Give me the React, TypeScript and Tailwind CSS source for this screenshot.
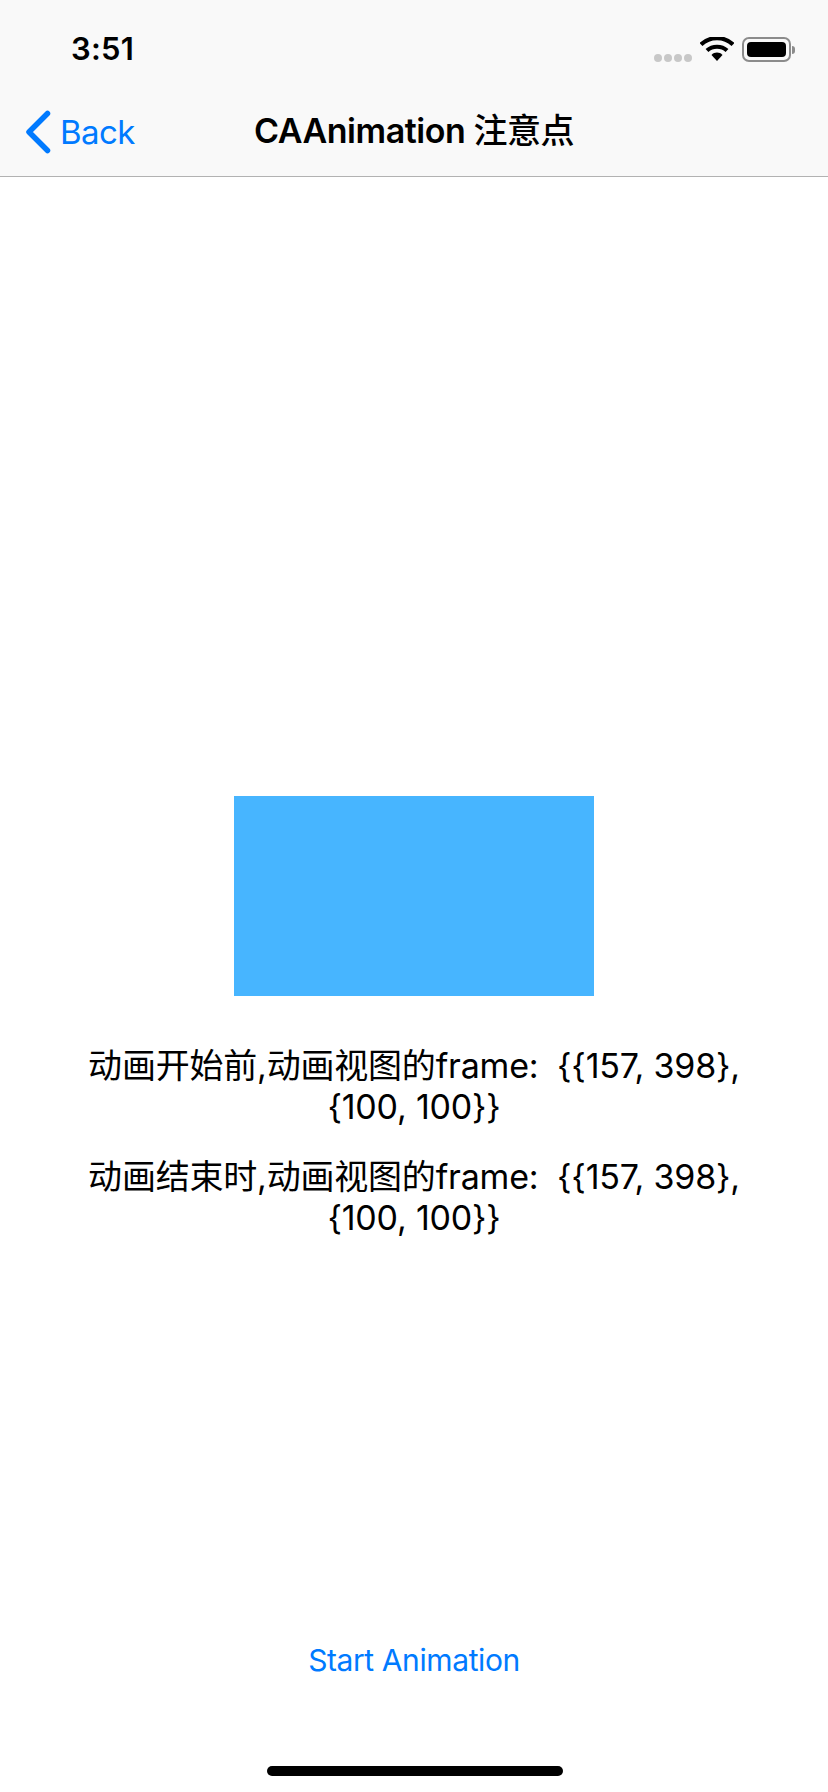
export default function App() {
  const sans = "font-['Inter','Noto_Sans_CJK_SC',sans-serif]";
  const lines = ["动画开始前,动画视图的frame:  {{157, 398},", "动画结束时,动画视图的frame:  {{157, 398},"];
  return (
    <div className={`relative flex h-[1792px] w-[828px] flex-col bg-white text-black ${sans}`}>
      <header className="h-[177px] shrink-0 border-b border-[#b2b2b2] bg-[#f9f9f9]">
        <div className="flex h-[88px] items-start justify-between pt-[31px] pl-[71px] pr-[33px]">
          <span className="text-[31px] leading-[36px] font-semibold tracking-[0.2px]">3:51</span>
          <div className="flex items-center pt-[6px]">
            <div className="mt-[16px] mr-[8px] flex gap-[2px]">
              {[0, 1, 2, 3].map((i) => (
                <span key={i} className="h-[8px] w-[8px] rounded-full bg-[#c8c8c8]" />
              ))}
            </div>
            <svg width="34" height="24" viewBox="0 0 34 24" className="mr-[8px] mb-[1px]">
              <path d="M1 7.5C10 -1 24 -1 33 7.5" fill="none" stroke="#000" strokeWidth="4.2" />
              <path d="M7 13.5C12.5 8.5 21.5 8.5 27 13.5" fill="none" stroke="#000" strokeWidth="4.2" />
              <path d="M11.5 18C14.5 14.8 19.5 14.8 22.5 18L17 24Z" fill="#000" />
            </svg>
            <div className="flex items-center">
              <div className="h-[25px] w-[49px] rounded-[7px] border-2 border-[#8c8c8c] p-[3px]">
                <div className="h-full w-full rounded-[4px] bg-black" />
              </div>
              <div className="ml-[1px] h-[8px] w-[3px] rounded-r-full bg-[#8c8c8c]" />
            </div>
          </div>
        </div>
        <div className="relative flex h-[88px] items-center justify-center">
          <div className="absolute left-[25px] top-[22px] flex items-center text-[#007aff]">
            <svg width="26" height="44" viewBox="0 0 26 44">
              <path d="M22.5 3.5L4 22L22.5 40.5" fill="none" stroke="#007aff" strokeWidth="5.5" strokeLinecap="round" strokeLinejoin="round" />
            </svg>
            <span className="ml-[9px] text-[33px] leading-[44px] tracking-[-0.6px]">Back</span>
          </div>
          <h1 className="mt-[-2px] text-[34px] leading-[44px] font-semibold tracking-[-0.45px]">
            CAAnimation <span className="font-medium">注意点</span>
          </h1>
        </div>
      </header>
      <main className="flex flex-1 flex-col items-center">
        <div className="mt-[619px] h-[200px] w-[360px] bg-[#47b5ff]" />
        <div className="mt-[49px] flex flex-col gap-[29px] text-center text-[34px] leading-[41px] tracking-[-0.2px]">
          {lines.map((l) => (
            <p key={l} className="whitespace-pre-wrap">
              {l}
              <br />
              {"{100, 100}}"}
            </p>
          ))}
        </div>
        <button className="mt-[404px] text-[30px] leading-[36px] tracking-[-0.4px] text-[#007aff]">Start Animation</button>
      </main>
      <div className="absolute bottom-[16px] left-[267px] h-[10px] w-[296px] rounded-full bg-black" />
    </div>
  );
}
